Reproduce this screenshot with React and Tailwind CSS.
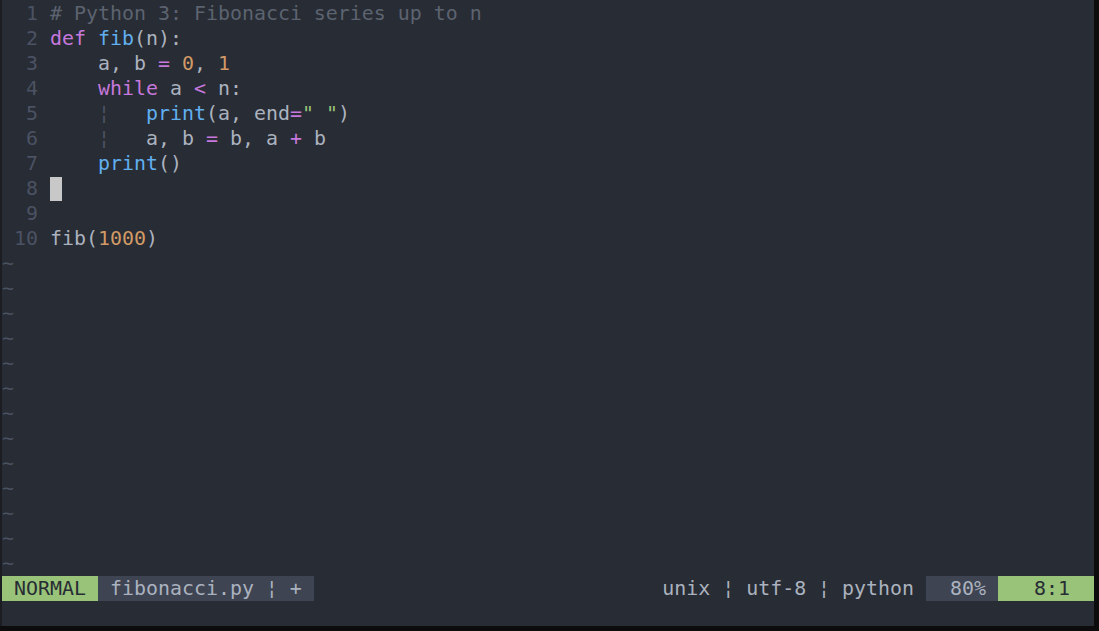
import React from "react";

const K = ({ children }) => <span className="text-[#c678dd]">{children}</span>;
const F = ({ children }) => <span className="text-[#61afef]">{children}</span>;
const N = ({ children }) => <span className="text-[#d19a66]">{children}</span>;
const S = ({ children }) => <span className="text-[#98c379]">{children}</span>;
const G = () => <span className="text-[#4b5263]">¦</span>;

const lines = [
  <span className="text-[#5c6370]"># Python 3: Fibonacci series up to n</span>,
  <>
    <K>def</K> <F>fib</F>(n):
  </>,
  <>
    {"    a, b "}<K>=</K> <N>0</N>, <N>1</N>
  </>,
  <>
    {"    "}<K>while</K> a <K>{"<"}</K> n:
  </>,
  <>
    {"    "}<G />{"   "}<F>print</F>(a, end<K>=</K><S>" "</S>)
  </>,
  <>
    {"    "}<G />{"   "}a, b <K>=</K> b, a <K>+</K> b
  </>,
  <>
    {"    "}<F>print</F>()
  </>,
  <span className="inline-block w-[12px] h-[24px] bg-[#c8c8c8] align-top mt-[1px]"></span>,
  <></>,
  <>
    fib(<N>1000</N>)
  </>,
];

export default function App() {
  const tildes = Array.from({ length: 13 });
  return (
    <div className="w-[1099px] h-[631px] bg-[#0c0c0c] overflow-hidden">
      <div className="flex h-[626px] w-[1094px]">
        <div className="w-[2px] bg-[#1b1d22]"></div>
        <div
          className="flex flex-col flex-1 bg-[#282c34] pt-[1px] text-[#abb2bf] text-[19.93px] leading-[25px] whitespace-pre"
          style={{ fontFamily: '"DejaVu Sans Mono", monospace' }}
        >
          {lines.map((l, i) => (
            <div key={i} className="flex h-[25px]">
              <span className="w-[36px] text-right text-[#4b5263]">{i + 1}</span>
              <span className="w-[12px]"> </span>
              <span>{l}</span>
            </div>
          ))}
          {tildes.map((_, i) => (
            <div key={"t" + i} className="h-[25px] text-[#4b5263]">~</div>
          ))}
          <div className="flex h-[25px] justify-between">
            <div className="flex">
              <span className="bg-[#98c379] text-[#282c34]"> NORMAL </span>
              <span className="bg-[#3e4452] text-[#abb2bf]"> fibonacci.py ¦ + </span>
            </div>
            <div className="flex">
              <span className="text-[#abb2bf]"> unix ¦ utf-8 ¦ python </span>
              <span className="bg-[#3e4452] text-[#abb2bf]">  80% </span>
              <span className="bg-[#98c379] text-[#282c34]">   8:1  </span>
            </div>
          </div>
          <div className="h-[25px]"></div>
        </div>
      </div>
    </div>
  );
}
